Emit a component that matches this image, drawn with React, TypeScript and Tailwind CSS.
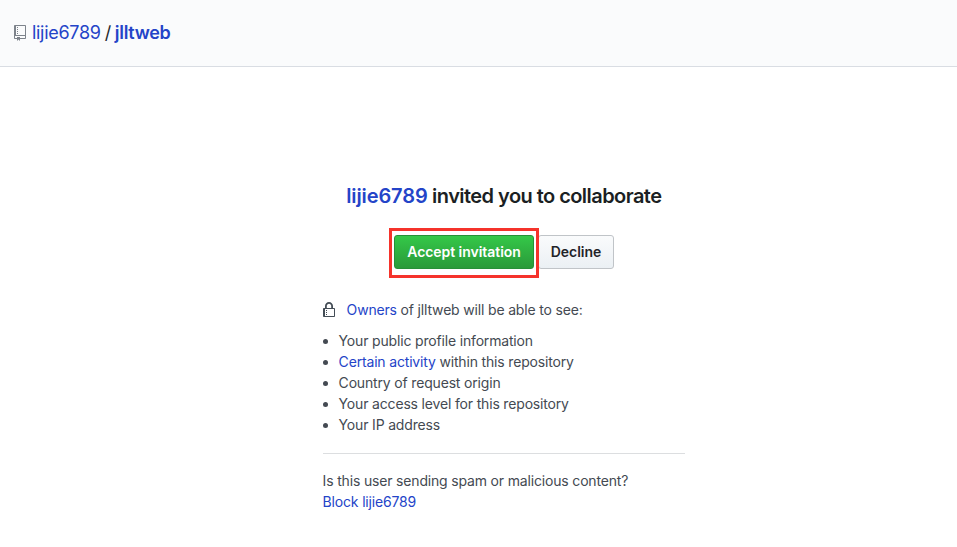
import React from "react";

const link = "text-[#2444c8]";

function RepoIcon() {
  return (
    <svg className="mr-[6px] h-4 w-3 shrink-0 fill-[#7d838b]" viewBox="0 0 12 16">
      <path fillRule="evenodd" d="M4 9H3V8h1v1zm0-3H3v1h1V6zm0-2H3v1h1V4zm0-2H3v1h1V2zm8-1v12c0 .55-.45 1-1 1H6v2l-1.5-1.5L3 16v-2H1c-.55 0-1-.45-1-1V1c0-.55.45-1 1-1h10c.55 0 1 .45 1 1zm-1 10H1v2h2v-1h3v1h5v-2zm0-10H2v9h9V1z" />
    </svg>
  );
}

function LockIcon() {
  return (
    <svg className="mr-3 h-4 w-3 shrink-0 fill-[#444d56]" viewBox="0 0 12 16">
      <path fillRule="evenodd" d="M4 13H3v-1h1v1zm8-6v7c0 .55-.45 1-1 1H1c-.55 0-1-.45-1-1V7c0-.55.45-1 1-1h1V4c0-2.2 1.8-4 4-4s4 1.8 4 4v2h1c.55 0 1 .45 1 1zM3.8 6h4.41V4c0-1.22-.98-2.2-2.2-2.2-1.22 0-2.2.98-2.2 2.2v2H3.8zM11 7H2v7h9V7zM4 8H3v1h1V8zm0 2H3v1h1v-1z" />
    </svg>
  );
}

const visibleDetails: React.ReactNode[] = [
  "Your public profile information",
  <><a className={link}>Certain activity</a> within this repository</>,
  "Country of request origin",
  "Your access level for this repository",
  "Your IP address",
];

export default function App() {
  return (
    <div className="h-[547px] overflow-hidden bg-white font-['Inter',sans-serif] text-sm leading-[21px] tracking-[-0.17px] text-[#444a52]">
      <header className="flex h-[67px] items-center border-b border-[#d9dde3] bg-[#fafbfc] pl-[14px]">
        <RepoIcon />
        <h1 className="flex whitespace-pre text-lg leading-[26px] tracking-[-0.3px] text-[#24292e]">
          <a className={link}>lijie6789</a>
          <span className="mx-1">/</span>
          <a className={`font-semibold ${link}`}>jlltweb</a>
        </h1>
      </header>
      <main className="ml-[322.6px] w-[362.4px] pt-[114px]">
        <h2 className="flex h-[30px] items-center justify-center whitespace-pre text-xl font-semibold tracking-[-0.55px] text-[#1b1f23]">
          <a className={`tracking-[-0.1px] ${link}`}>lijie6789</a> invited you to collaborate
        </h2>
        <div className="mt-6 ml-[71.4px] flex gap-1">
          <div className="relative">
            <button className="h-[34px] w-[140px] rounded-[3px] border border-[#279038] bg-linear-to-b from-[#34c848] to-[#2a9a3a] text-sm font-semibold tracking-[-0.05px] text-white">Accept invitation</button>
            <div className="pointer-events-none absolute -top-[7px] -left-[5px] h-[50px] w-[150px] border-[3px] border-[#f5332b]" />
          </div>
          <button className="h-[34px] w-[76px] rounded-[3px] border border-[#c0c4c8] bg-linear-to-b from-[#fafbfc] to-[#ebf0f4] text-sm font-semibold tracking-[-0.05px] text-[#1f2328]">Decline</button>
        </div>
        <p className="mt-[30px] flex items-center whitespace-pre">
          <LockIcon />
          <a className={link}>Owners</a> of jlltweb will be able to see:
        </p>
        <ul className="mt-[10px] list-disc pl-4">
          {visibleDetails.map((detail, i) => <li key={i}>{detail}</li>)}
        </ul>
        <hr className="mt-[18px] border-[#dcdee0]" />
        <p className="mt-4">Is this user sending spam or malicious content?</p>
        <a className={link}>Block lijie6789</a>
      </main>
    </div>
  );
}
